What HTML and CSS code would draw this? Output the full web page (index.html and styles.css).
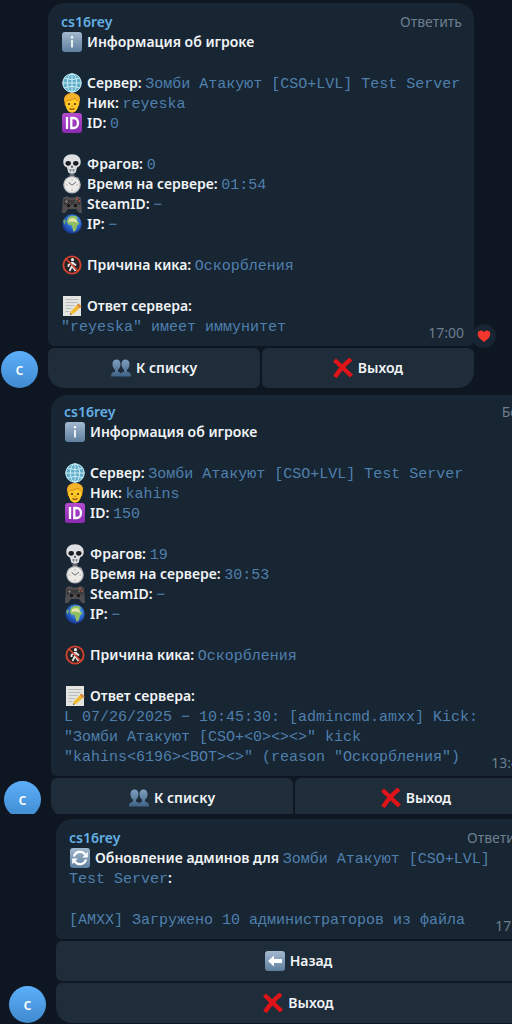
FILE: index.html
```
<!DOCTYPE html>
<html lang="ru">
<head>
    <meta charset="UTF-8">
    <meta name="viewport" content="width=device-width, initial-scale=1.0">
    <title>cs16rey</title>
    <link rel="stylesheet" href="styles.css">
</head>
<body>

<!-- Icons -->
<svg class="sprite" aria-hidden="true">
    <defs>
        <linearGradient id="tile" x1="0" y1="0" x2="0" y2="1">
            <stop offset="0" stop-color="#a3b9cf"/>
            <stop offset="1" stop-color="#5f7f9f"/>
        </linearGradient>
        <linearGradient id="violet" x1="0" y1="0" x2="0" y2="1">
            <stop offset="0" stop-color="#b44ccf"/>
            <stop offset="1" stop-color="#8a2bb0"/>
        </linearGradient>
        <radialGradient id="ocean" cx="0.6" cy="0.35" r="0.7">
            <stop offset="0" stop-color="#58b4f0"/>
            <stop offset="0.6" stop-color="#2860c8"/>
            <stop offset="1" stop-color="#142c80"/>
        </radialGradient>
        <linearGradient id="people" x1="0" y1="0" x2="0" y2="1">
            <stop offset="0" stop-color="#7e9ebe"/>
            <stop offset="1" stop-color="#3f6488"/>
        </linearGradient>
    </defs>
    <symbol id="info" viewBox="0 0 20 20">
        <rect width="20" height="20" rx="3" fill="url(#tile)"/>
        <circle cx="10" cy="5.3" r="1.2" fill="#fff"/>
        <path d="M10 8v7.500" fill="none" stroke="#fff" stroke-width="1.700"/>
    </symbol>
    <symbol id="globe" viewBox="0 0 20 20">
        <circle cx="10" cy="10" r="9.6" fill="#64adc9"/>
        <g fill="none" stroke="#c9edf5" stroke-width="1">
            <circle cx="10" cy="10" r="9.2"/>
            <ellipse cx="10" cy="10" rx="4.6" ry="9.2"/>
            <path d="M10 1v18M1 10h18M2.4 5.4q7.600 2.400 15.200 0M2.400 14.600q7.600-2.400 15.200 0"/>
        </g>
    </symbol>
    <symbol id="person" viewBox="0 0 20 20">
        <path d="M2 7C2 2 5.500 0 10 0s8 2 8 7l-1 6H3z" fill="#d98a12"/>
        <path d="M3.500 6h13.300C17.500 14 14.500 19.700 10 19.700S2.500 14 3.500 6z" fill="#ffc927"/>
        <path d="M2 8C2 3 6 0.300 10 0.300s8.500 2 8 7.700C15 7.500 13.500 6.500 12.500 5 10.500 7 7 7.700 4 7.300z" fill="#f3b32b"/>
        <path d="M4 7.600c3.500 0.200 6.800-0.700 8.500-2.600 1 1.500 2.200 2.400 4 2.800" fill="none" stroke="#c97f12" stroke-width="0.700"/>
        <circle cx="7" cy="11" r="1.100" fill="#4e3315"/>
        <circle cx="13" cy="11" r="1.100" fill="#4e3315"/>
        <path d="M9.500 13.300h1.300" stroke="#b96f10"/>
        <path d="M7.500 15.500q2.500 1.500 5 0" fill="none" stroke="#7d3b12" stroke-width="1.200"/>
    </symbol>
    <symbol id="id" viewBox="0 0 20 20">
        <rect width="20" height="20" rx="3" fill="url(#violet)"/>
        <path d="M5 4v12M9.300 5h2.200c6 0 6 10 0 10H9.300z" fill="none" stroke="#fff" stroke-width="2.300"/>
    </symbol>
    <symbol id="skull" viewBox="0 0 20 20">
        <path d="M10 0.300C4.500 0.300 1.300 3.500 1.300 8c0 2.500 0.800 4.500 3.700 5.500L6.300 18.500q3.700 2.400 7.400 0L15 13.500c2.900-1 3.700-3 3.700-5.500 0-4.500-3.200-7.700-8.700-7.700z" fill="#dedfe3"/>
        <ellipse cx="6.200" cy="9.300" rx="2.700" ry="2.400" fill="#171c24"/>
        <ellipse cx="13.800" cy="9.300" rx="2.700" ry="2.400" fill="#171c24"/>
        <path d="M10 11.300l-1.300 2.200h2.600z" fill="#252b33"/>
        <path d="M7 16h6M8.500 15v3M11.500 15v3" stroke="#777d87" stroke-width="0.800"/>
    </symbol>
    <symbol id="watch" viewBox="0 0 20 20">
        <path d="M7.500 0h5v3h-5zM15 2.500l2.500 2-1.500 1.500-2-2z" fill="#666b72"/>
        <circle cx="10" cy="10.800" r="8.800" fill="#b5b8bb"/>
        <circle cx="10" cy="10.800" r="7.500" fill="#ecebe8"/>
        <path d="M10 5v1.500M10 15.500V17M4 11h1.500M14.500 11H16" stroke="#a5a8aa"/>
        <path d="M6.500 8.300l3.500 2.900 4-3.200" fill="none" stroke="#65696d" stroke-width="1"/>
    </symbol>
    <symbol id="gamepad" viewBox="0 0 20 20">
        <path d="M1 4q3.500-3 6.500-0.500h5Q15.500 1 19 4l1 15h-3l-3-4H6l-3 4H0z" fill="#504e51"/>
        <path d="M2 5q8 2 16 0l0.500 6h-17z" fill="#3b393c"/>
        <circle cx="6.500" cy="11.500" r="2.400" fill="#1b1b1f" stroke="#67615f" stroke-width="0.700"/>
        <circle cx="13.500" cy="11.500" r="2.400" fill="#1b1b1f" stroke="#67615f" stroke-width="0.700"/>
        <path d="M3 7.500h3M4.500 6v3" stroke="#777"/>
        <circle cx="15" cy="5" r="1" fill="#b65d45"/>
        <circle cx="17" cy="7" r="1" fill="#b84f37"/>
        <circle cx="14" cy="7.300" r="0.800" fill="#688a69"/>
    </symbol>
    <symbol id="earth" viewBox="0 0 20 20">
        <circle cx="10" cy="10" r="9.700" fill="url(#ocean)"/>
        <path d="M6 3.500l3.500-1.800 5 0.600 1.500 2-2 1.200 3.500 4-2.500 2-1 4.500-2.500 2-1.300-5-1-2.300H6.500L4.700 8z" fill="#8fbf62"/>
        <path d="M7 5l4-1 3 1 1.500 4-4-1.500-5 0.500z" fill="#e3e3a8"/>
        <path d="M1 7l2-2 1 2-1.500 4z" fill="#68a66c"/>
    </symbol>
    <symbol id="ban" viewBox="0 0 20 20">
        <circle cx="10" cy="10" r="8.600" fill="#262326" stroke="#d1432f" stroke-width="1.900"/>
        <circle cx="10.500" cy="4.700" r="1.600" fill="#e8e8e8"/>
        <path d="M10.300 7v4.500L13.500 16M10 11l-2.500 5M10 7.500L6.500 10v2M10.500 7.500l3.500 3" fill="none" stroke="#e8e8e8" stroke-width="1.700"/>
        <path d="M4 4l12 12" stroke="#d1432f" stroke-width="1.700"/>
    </symbol>
    <symbol id="memo" viewBox="0 0 20 20">
        <path d="M1 0h18v20H1z" fill="#e4e4e1"/>
        <path d="M3.500 3.500h13M3.500 6.500h12M3.500 9.500h9M3.500 12.500h6M3.500 15.500h4" stroke="#b8bcc0" stroke-width="1"/>
        <path d="M16.500 7.500l3 3-8 7-3.500 1.500 1-3.700z" fill="#f0b92f"/>
        <path d="M16.500 7.500l3 3-1.700 1.500-3-3z" fill="#d5874b"/>
        <path d="M8 19l0.500-1.800 1.200 1.100z" fill="#333"/>
    </symbol>
    <symbol id="users" viewBox="0 0 20 20">
        <g fill="url(#people)">
            <path d="M0 18.500c0-3 1-4 4-4.700v-2C2 10 1.500 8 1.500 6c0-3 1.500-4.500 4-4.500s4 1.500 4 4.500c0 2-0.500 4-2.500 5.800v2c3 0.700 3.500 1.700 3.500 4.700z"/>
            <path d="M9.500 18.500c0-3 1-4 3.500-4.700v-2C11 10 10.500 8 10.500 6c0-3 1.500-4.500 4-4.500s4 1.500 4 4.500c0 2-0.500 4-2.500 5.800v2c3 0.700 4 1.700 4 4.700z"/>
        </g>
    </symbol>
    <symbol id="cross" viewBox="0 0 20 20">
        <path d="M1.500 2l17 16M18 1Q9 8 2 19" fill="none" stroke="#df1418" stroke-width="4.300"/>
    </symbol>
    <symbol id="refresh" viewBox="0 0 20 20">
        <rect width="20" height="20" rx="3" fill="url(#tile)"/>
        <path d="M4 8.500a6.200 6.200 0 0 1 11.200-1.800M16 11.500a6.200 6.200 0 0 1-11.200 1.800" fill="none" stroke="#fff" stroke-width="2.200"/>
        <path d="M17.800 3.800v5.700h-5.600zM2.200 16.200v-5.700h5.600z" fill="#fff"/>
    </symbol>
    <symbol id="back" viewBox="0 0 20 20">
        <rect width="20" height="20" rx="3" fill="url(#tile)"/>
        <path d="M3 10l6-5.500V8h8v4H9v3.500z" fill="#fff"/>
    </symbol>
    <symbol id="heart" viewBox="0 0 20 20">
        <path d="M10 18.500C4 14 1 11 1 7c0-5 6.500-6.500 9-2.300C12.500 0.500 19 2 19 7c0 4-3 7-9 11.500z" fill="#f5362d"/>
    </symbol>
</svg>

<main class="chat">

    <section class="message first">
        <div class="avatar">c</div>
        <div class="content">
            <article class="bubble">
                <header>
                    <a href="#" class="author">cs16rey</a>
                    <button type="button" class="reply">Ответить</button>
                </header>
                <p class="row"><svg class="icon"><use href="#info"/></svg>Информация об игроке</p>
                <div class="group">
                    <p class="row"><svg class="icon"><use href="#globe"/></svg>Сервер: <code>Зомби Атакуют [CSO+LVL] Test Server</code></p>
                    <p class="row"><svg class="icon"><use href="#person"/></svg>Ник: <code>reyeska</code></p>
                    <p class="row"><svg class="icon"><use href="#id"/></svg>ID: <code>0</code></p>
                </div>
                <div class="group">
                    <p class="row"><svg class="icon"><use href="#skull"/></svg>Фрагов: <code>0</code></p>
                    <p class="row"><svg class="icon"><use href="#watch"/></svg>Время на сервере: <code>01:54</code></p>
                    <p class="row"><svg class="icon"><use href="#gamepad"/></svg>SteamID: <code>−</code></p>
                    <p class="row"><svg class="icon"><use href="#earth"/></svg>IP: <code>−</code></p>
                </div>
                <div class="group">
                    <p class="row"><svg class="icon"><use href="#ban"/></svg>Причина кика: <code>Оскорбления</code></p>
                </div>
                <div class="group">
                    <p class="row"><svg class="icon"><use href="#memo"/></svg>Ответ сервера:</p>
                    <p class="row"><code>"reyeska" имеет иммунитет</code></p>
                </div>
                <time class="time">17:00</time>
                <span class="reaction"><svg><use href="#heart"/></svg></span>
            </article>
            <div class="keyboard two">
                <button type="button"><svg class="icon"><use href="#users"/></svg>К списку</button>
                <button type="button"><svg class="icon"><use href="#cross"/></svg>Выход</button>
            </div>
        </div>
    </section>

    <section class="message second">
        <div class="avatar">c</div>
        <div class="content">
            <article class="bubble">
                <header>
                    <a href="#" class="author">cs16rey</a>
                    <span class="reply">Бот</span>
                </header>
                <p class="row"><svg class="icon"><use href="#info"/></svg>Информация об игроке</p>
                <div class="group">
                    <p class="row"><svg class="icon"><use href="#globe"/></svg>Сервер: <code>Зомби Атакуют [CSO+LVL] Test Server</code></p>
                    <p class="row"><svg class="icon"><use href="#person"/></svg>Ник: <code>kahins</code></p>
                    <p class="row"><svg class="icon"><use href="#id"/></svg>ID: <code>150</code></p>
                </div>
                <div class="group">
                    <p class="row"><svg class="icon"><use href="#skull"/></svg>Фрагов: <code>19</code></p>
                    <p class="row"><svg class="icon"><use href="#watch"/></svg>Время на сервере: <code>30:53</code></p>
                    <p class="row"><svg class="icon"><use href="#gamepad"/></svg>SteamID: <code>−</code></p>
                    <p class="row"><svg class="icon"><use href="#earth"/></svg>IP: <code>−</code></p>
                </div>
                <div class="group">
                    <p class="row"><svg class="icon"><use href="#ban"/></svg>Причина кика: <code>Оскорбления</code></p>
                </div>
                <div class="group">
                    <p class="row"><svg class="icon"><use href="#memo"/></svg>Ответ сервера:</p>
                    <p class="row"><code>L 07/26/2025 − 10:45:30: [admincmd.amxx] Kick:</code></p>
                    <p class="row"><code>"Зомби Атакуют [CSO+&lt;0&gt;&lt;&gt;&lt;&gt;" kick</code></p>
                    <p class="row"><code>"kahins&lt;6196&gt;&lt;BOT&gt;&lt;&gt;" (reason "Оскорбления")</code></p>
                </div>
                <time class="time">13:46</time>
            </article>
            <div class="keyboard two">
                <button type="button"><svg class="icon"><use href="#users"/></svg>К списку</button>
                <button type="button"><svg class="icon"><use href="#cross"/></svg>Выход</button>
            </div>
        </div>
    </section>

    <section class="message third">
        <div class="avatar">c</div>
        <div class="content">
            <article class="bubble">
                <header>
                    <a href="#" class="author">cs16rey</a>
                    <button type="button" class="reply">Ответить</button>
                </header>
                <p class="row wrap"><svg class="icon"><use href="#refresh"/></svg>Обновление админов для <code>Зомби Атакуют [CSO+LVL] Test Server</code>:</p>
                <div class="group">
                    <p class="row"><code>[AMXX] Загружено 10 администраторов из файла</code></p>
                </div>
                <time class="time">17:00</time>
            </article>
            <div class="keyboard">
                <button type="button"><svg class="icon"><use href="#back"/></svg>Назад</button>
                <button type="button"><svg class="icon"><use href="#cross"/></svg>Выход</button>
            </div>
        </div>
    </section>

</main>

</body>
</html>
```
FILE: styles.css
```
* {
    box-sizing: border-box;
}
body {
    font-family: "Noto Sans", "Open Sans", sans-serif;
    font-size: 14px;
    line-height: 20px;
    background-color: #0e1621;
    color: #f1f4f6;
    margin: 0;
}
button {
    font: inherit;
    color: inherit;
    border: none;
    cursor: pointer;
}
.sprite {
    position: absolute;
    width: 0;
    height: 0;
}
.chat {
    padding-top: 3px;
    overflow: hidden;
}
.message {
    display: flex;
    align-items: flex-end;
    gap: 10px;
}
.content {
    flex: 1;
    min-width: 0;
}
.avatar {
    flex: none;
    width: 37px;
    height: 37px;
    border-radius: 50%;
    background: linear-gradient(#5caffa, #408acf);
    color: #ffffff;
    font-size: 16px;
    font-weight: 500;
    line-height: 37px;
    text-align: center;
}
.bubble {
    position: relative;
    background-color: #182533;
    border-radius: 16px 16px 6px 6px;
    padding: 9px 12px 10px 13px;
    margin-bottom: 2px;
}
.bubble header {
    display: flex;
    justify-content: space-between;
}
.author {
    color: #64b0e4;
    font-weight: 600;
    text-decoration: none;
}
.reply {
    background: none;
    padding: 0;
    color: #6d7f8f;
}
.row {
    margin: 0;
    min-height: 20px;
    font-weight: 600;
    white-space: nowrap;
}
.row.wrap {
    white-space: normal;
}
.group {
    margin-top: 21px;
}
.icon {
    width: 20px;
    height: 20px;
    margin-right: 5px;
    vertical-align: top;
}
.row .icon {
    margin-left: 1px;
}
code {
    font-family: "Liberation Mono", monospace;
    font-size: 15px;
    font-weight: 400;
    line-height: 1;
    color: #4f80ad;
}
.time {
    position: absolute;
    right: 10px;
    bottom: 3px;
    color: #6d7f8f;
}
.reaction {
    position: absolute;
    right: -22px;
    bottom: -2px;
    display: flex;
    align-items: center;
    justify-content: center;
    width: 24px;
    height: 24px;
    border-radius: 50%;
    background-color: #182533;
}
.reaction svg {
    width: 14px;
    height: 14px;
}
.keyboard {
    display: grid;
    gap: 2px;
}
.keyboard.two {
    grid-template-columns: 1fr 1fr;
}
.keyboard button {
    height: 40px;
    padding: 0;
    background-color: #1f2c39;
    border-radius: 6px;
    font-weight: 600;
}
.keyboard button:hover {
    background-color: #263646;
}
.keyboard.two button:first-child {
    border-bottom-left-radius: 16px;
}
.keyboard.two button:last-child {
    border-bottom-right-radius: 16px;
}
.keyboard:not(.two) button:last-child {
    border-radius: 6px 6px 16px 16px;
}

/* Each message keeps its own side margins */
.first {
    margin: 0 38px 7px 1px;
}
.second {
    margin: 0 -25px 5px 4px;
    overflow: hidden;
}
.third {
    margin: 0 -29px 0 9px;
}
.second .bubble {
    padding-top: 7px;
}
.second .avatar,
.second .keyboard {
    margin-bottom: -4px;
}
```
